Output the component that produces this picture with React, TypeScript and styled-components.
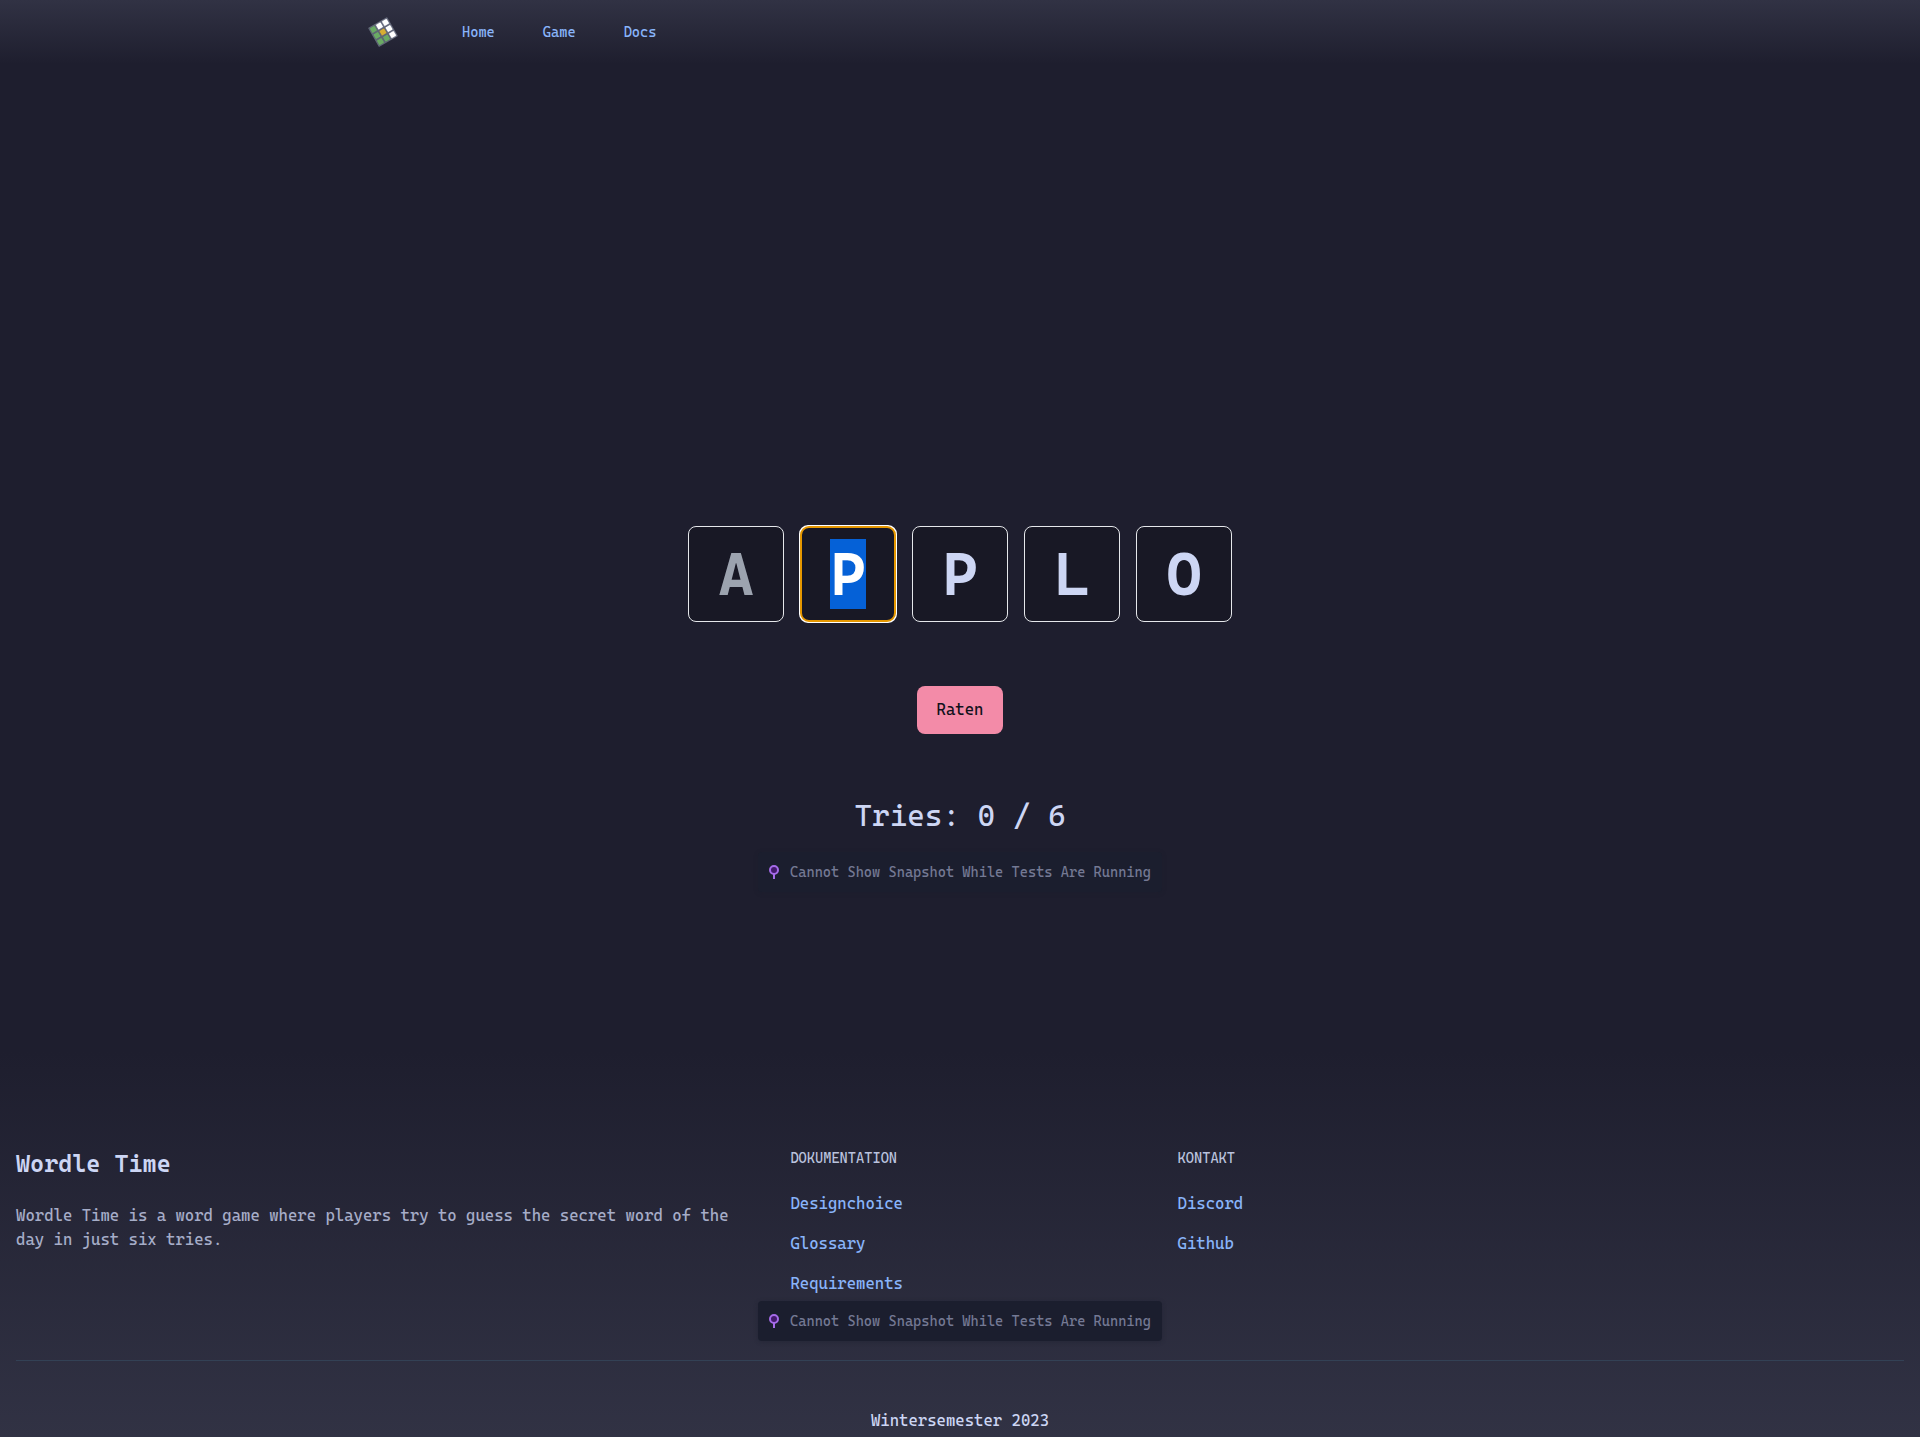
import React, { useEffect, useRef } from "react";
import styled, { createGlobalStyle } from "styled-components";

const mono = `"Cascadia Code", "DejaVu Sans Mono", "Liberation Mono", monospace`;

const GlobalStyle = createGlobalStyle`
  *, *::before, *::after { box-sizing: border-box; }
  body { margin: 0; background: #1e1e2e; color: #cdd6f4; font-family: ${mono}; font-size: 16px; line-height: 24px; }
  h1, h2, h3, p, ul { margin: 0; padding: 0; }
  ul { list-style: none; }
`;

const Page = styled.div`
  display: flex;
  flex-direction: column;
  min-height: 100vh;
`;

const Header = styled.header`
  height: 64px;
  background: linear-gradient(to bottom, #313244, #1e1e2e);
`;

const Nav = styled.nav`
  display: flex;
  align-items: center;
  gap: 64px;
  height: 100%;
  max-width: 1184px;
  margin: 0 auto;
`;

const LogoLink = styled.a`
  display: flex;
`;

const Menu = styled.ul`
  display: flex;
  gap: 48px;
  font-size: 14px;
  line-height: 20px;
`;

const TextLink = styled.a`
  color: #89b4fa;
  text-decoration: none;
`;

const Main = styled.main`
  flex: 1;
  display: flex;
  flex-direction: column;
  align-items: center;
  padding: 462px 16px 0;
`;

const Form = styled.form`
  display: flex;
  flex-direction: column;
  align-items: center;
  gap: 64px;
  margin-bottom: 64px;
`;

const Row = styled.div`
  display: flex;
  gap: 16px;
`;

const Tile = styled.input`
  width: 96px;
  height: 96px;
  padding: 0;
  border: 1px solid #e5e7eb;
  border-radius: 8px;
  background: #181825;
  color: #cdd6f4;
  font-family: ${mono};
  font-size: 60px;
  font-weight: 700;
  text-align: center;

  &:disabled {
    color: #9ca3af;
  }
  &:focus {
    outline: auto 1px #e59700;
  }
  &::selection {
    background: #0561d7;
    color: #ffffff;
  }
`;

const GuessButton = styled.button`
  height: 48px;
  padding: 0 20px;
  border: 0;
  border-radius: 8px;
  background: #f38ba8;
  color: #11111b;
  font: 16px/24px ${mono};
`;

const Tries = styled.p`
  font-size: 30px;
  line-height: 36px;
  margin-bottom: 18px;
`;

const Notice = styled.div`
  display: flex;
  align-items: center;
  gap: 10px;
  height: 40px;
  padding: 0 11px 0 10px;
  border-radius: 4px;
  background: #1b1e2e;
  box-shadow: 0 1px 4px rgba(27, 30, 46, 0.4);
  color: #747994;
  font-size: 14px;
  line-height: 20px;
  white-space: nowrap;
`;

const Footer = styled.footer`
  padding: 96px 16px 4px;
  background: linear-gradient(to top, #313244, #1e1e2e);
`;

const Columns = styled.div`
  display: grid;
  grid-template-columns: repeat(5, 1fr);
  column-gap: 48px;
`;

const About = styled.section`
  grid-column: span 2;
`;

const Brand = styled.h2`
  font-size: 24px;
  line-height: 32px;
  font-weight: 600;
  margin-bottom: 24px;
`;

const Blurb = styled.p`
  color: #a6adc8;
`;

const ColumnTitle = styled.h3`
  color: #bac2de;
  font-size: 14px;
  line-height: 20px;
  font-weight: 500;
  text-transform: uppercase;
  margin-bottom: 24px;
`;

const LinkList = styled.ul`
  display: grid;
  gap: 16px;
`;

const FooterNotice = styled.div`
  display: flex;
  justify-content: center;
  padding: 5px 0 19px;
`;

const Term = styled.p`
  padding-top: 48px;
  border-top: 1px solid #334155;
  text-align: center;
`;

const green = "#6aaa64";
const white = "#ffffff";
const yellow = "#d8ae33";
const cells = [green, white, white, green, yellow, white, green, green, white];

function Logo() {
  return (
    <svg width="30" height="30" viewBox="0 0 30 30" aria-hidden="true">
      <g transform="rotate(-30 15 15)">
        <rect x="4" y="4" width="22" height="22" rx="1" fill="#626778" />
        {cells.map((fill, i) => (
          <rect
            key={i}
            x={5 + (i % 3) * 7}
            y={5 + Math.floor(i / 3) * 7}
            width="6"
            height="6"
            rx="1"
            fill={fill}
            stroke="#565b73"
            strokeWidth="0.5"
          />
        ))}
      </g>
    </svg>
  );
}

function SnapshotNotice() {
  return (
    <Notice role="status">
      <svg width="12" height="16" viewBox="0 0 12 16" fill="none" aria-hidden="true">
        <path d="M6 10V15" stroke="#a56be8" strokeWidth="2" />
        <circle cx="6" cy="6" r="4" fill="#43196b" stroke="#a56be8" strokeWidth="2" />
      </svg>
      Cannot Show Snapshot While Tests Are Running
    </Notice>
  );
}

function FooterColumn({ title, links }: { title: string; links: string[] }) {
  return (
    <section>
      <ColumnTitle>{title}</ColumnTitle>
      <LinkList>
        {links.map((name) => (
          <li key={name}><TextLink href={`#${name.toLowerCase()}`}>{name}</TextLink></li>
        ))}
      </LinkList>
    </section>
  );
}

export default function App() {
  const active = useRef<HTMLInputElement>(null);

  useEffect(() => {
    active.current?.focus({ preventScroll: true });
    active.current?.select();
  }, []);

  return (
    <Page>
      <GlobalStyle />
      <Header>
        <Nav>
          <LogoLink href="#home" aria-label="Wordle Time"><Logo /></LogoLink>
          <Menu>
            {["Home", "Game", "Docs"].map((name) => (
              <li key={name}><TextLink href={`#${name.toLowerCase()}`}>{name}</TextLink></li>
            ))}
          </Menu>
        </Nav>
      </Header>
      <Main>
        <Form onSubmit={(e) => e.preventDefault()}>
          <Row>
            {["A", "P", "P", "L", "O"].map((letter, i) => (
              <Tile
                key={i}
                ref={i === 1 ? active : undefined}
                aria-label={`Letter ${i + 1}`}
                defaultValue={letter}
                maxLength={1}
                disabled={i === 0}
              />
            ))}
          </Row>
          <GuessButton type="submit">Raten</GuessButton>
        </Form>
        <Tries>Tries: 0 / 6</Tries>
        <SnapshotNotice />
      </Main>
      <Footer>
        <Columns>
          <About>
            <Brand>Wordle Time</Brand>
            <Blurb>Wordle Time is a word game where players try to guess the secret word of the day in just six tries.</Blurb>
          </About>
          <FooterColumn title="Dokumentation" links={["Designchoice", "Glossary", "Requirements"]} />
          <FooterColumn title="Kontakt" links={["Discord", "Github"]} />
        </Columns>
        <FooterNotice><SnapshotNotice /></FooterNotice>
        <Term>Wintersemester 2023</Term>
      </Footer>
    </Page>
  );
}
